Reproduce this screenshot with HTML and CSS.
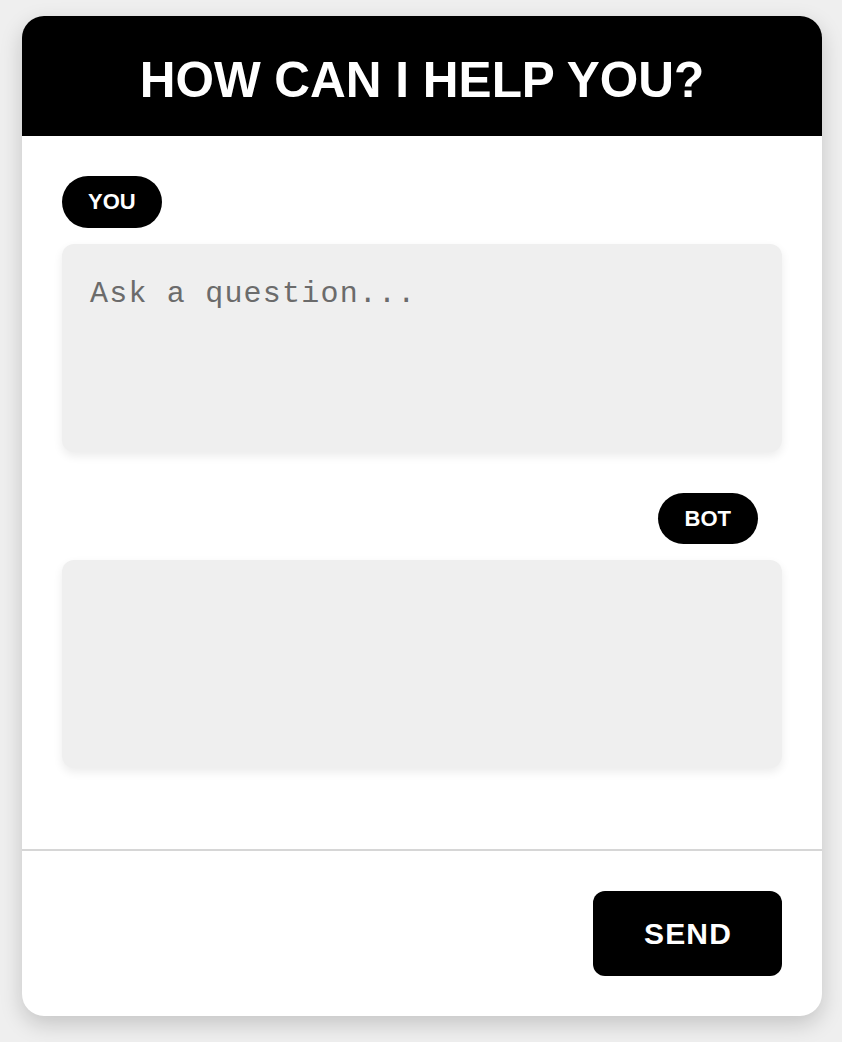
FILE: index.html
```html
<!DOCTYPE html>
<html lang="en">
<head>
<meta charset="utf-8">
<title>How can I help you?</title>
<link rel="stylesheet" href="styles.css">
</head>
<body>
  <main class="card">
    <header class="card-header">
      <h1 class="title">HOW CAN I HELP YOU?</h1>
    </header>
    <section class="chat">
      <span class="tag tag-you">YOU</span>
      <textarea class="box box-input" placeholder="Ask a question..."></textarea>
      <span class="tag tag-bot">BOT</span>
      <div class="box box-output"></div>
    </section>
    <footer class="card-footer">
      <button class="send" type="button">SEND</button>
    </footer>
  </main>
</body>
</html>
```
FILE: styles.css
```css
html, body {
  margin: 0;
  padding: 0;
}

body {
  background: #efefef;
  font-family: "Liberation Sans", Arial, Helvetica, sans-serif;
  padding: 16px 0 26px 22px;
}

.card {
  width: 800px;
  height: 1000px;
  background: #ffffff;
  border-radius: 22px;
  box-shadow: 0 8px 22px rgba(0, 0, 0, 0.18);
  display: flex;
  flex-direction: column;
  overflow: hidden;
}

.card-header {
  height: 120px;
  background: #000000;
  display: flex;
  align-items: center;
  justify-content: center;
  padding-top: 6px;
  box-sizing: border-box;
}

.title {
  margin: 0;
  color: #ffffff;
  font-size: 49.5px;
  font-weight: 700;
  line-height: normal;
}

.chat {
  flex: 1;
  display: flex;
  flex-direction: column;
  align-items: flex-start;
  padding: 40px 40px;
}

.tag {
  display: inline-flex;
  align-items: center;
  justify-content: center;
  height: 52px;
  padding: 0 26px;
  box-sizing: border-box;
  background: #000000;
  color: #ffffff;
  font-size: 22px;
  font-weight: 700;
  border-radius: 26px;
}

.tag-bot {
  align-self: flex-end;
  margin-right: 24px;
  height: 51px;
  padding: 0 27px;
}

.box {
  width: 720px;
  height: 208px;
  margin-top: 16px;
  box-sizing: border-box;
  background: #efefef;
  border: none;
  border-radius: 12px;
  box-shadow: 0 4px 10px rgba(0, 0, 0, 0.08);
}

.box-input {
  margin-bottom: 41px;
  padding: 33px 28px 28px;
  resize: none;
  outline: none;
  font-family: "Liberation Mono", "Courier New", monospace;
  font-size: 30px;
  letter-spacing: 1.2px;
  color: #333333;
}

.box-input::placeholder {
  color: #6b6b6b;
  opacity: 1;
}

.card-footer {
  border-top: 2px solid #d6d6d6;
  padding: 40px;
  display: flex;
  justify-content: flex-end;
}

.send {
  width: 189px;
  height: 85px;
  background: #000000;
  color: #ffffff;
  border: none;
  border-radius: 12px;
  font-family: "Liberation Sans", Arial, Helvetica, sans-serif;
  font-size: 30px;
  font-weight: 700;
  letter-spacing: 1.2px;
  padding: 0 0 0 1px;
  cursor: pointer;
}
```
